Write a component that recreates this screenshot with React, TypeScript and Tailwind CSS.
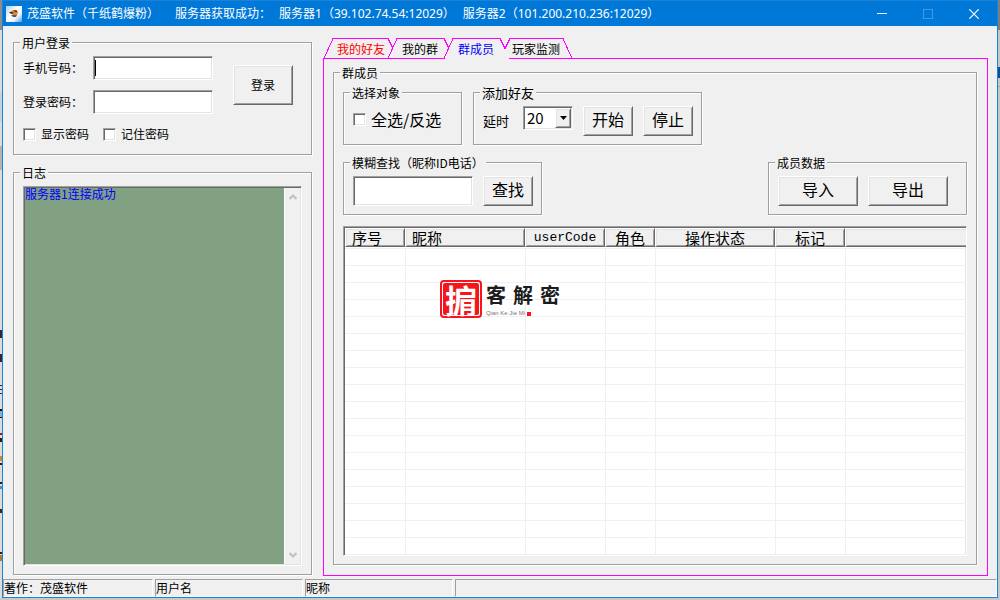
import { useState } from 'react'
import type { ReactNode } from 'react'

const sunken = 'border border-t-[#a0a0a0] border-l-[#a0a0a0] border-b-white border-r-white shadow-[inset_1px_1px_0_#696969,inset_-1px_-1px_0_#e3e3e3]'
const raised = 'border border-t-white border-l-white border-b-[#696969] border-r-[#696969] bg-[#f0f0f0] shadow-[inset_1px_1px_0_#e3e3e3,inset_-1px_-1px_0_#a0a0a0]'
const raisedOpen = 'border border-r-0 border-t-white border-l-white border-b-[#696969] bg-[#f0f0f0] shadow-[inset_1px_1px_0_#e3e3e3,inset_0_-1px_0_#a0a0a0]'

const tabs = [
  { name: '我的好友', className: 'w-14 text-[#ff0000]' },
  { name: '我的群', className: 'w-[46px] text-black' },
  { name: '群成员', className: 'w-[50px] text-[#0000ff]' },
  { name: '玩家监测', className: 'w-[54px] text-black' },
]

const columns = [
  { name: '序号', col: 'w-[60px]', head: 'text-left text-[15px] pl-1.5' },
  { name: '昵称', col: 'w-[120px]', head: 'text-left text-[15px] pl-1.5' },
  { name: 'userCode', col: 'w-[80px]', head: "text-center text-[13px] font-['Liberation_Mono',monospace]" },
  { name: '角色', col: 'w-[50px]', head: 'text-center text-[15px]' },
  { name: '操作状态', col: 'w-[120px]', head: 'text-center text-[15px]' },
  { name: '标记', col: 'w-[70px]', head: 'text-center text-[15px]' },
  { name: '', col: '', head: '' },
]

const emptyRows = Array.from({ length: 18 }, (_, i) => i)

const desktopMarks = [
  { y: 330, h: 8, color: '#3a2040' },
  { y: 354, h: 8, color: '#3a2040' },
  { y: 385, h: 1, color: '#1b2a60' },
  { y: 389, h: 1, color: '#1b2a60' },
  { y: 393, h: 1, color: '#1b2a60' },
  { y: 409, h: 2, color: '#111111' },
  { y: 411, h: 6, color: '#6fb4e8' },
  { y: 417, h: 1, color: '#111111' },
  { y: 433, h: 2, color: '#8a2020' },
  { y: 438, h: 4, color: '#222222' },
  { y: 456, h: 5, color: '#c98a3a' },
  { y: 463, h: 2, color: '#222222' },
  { y: 482, h: 2, color: '#222222' },
  { y: 486, h: 3, color: '#4b8fd0' },
  { y: 509, h: 4, color: '#3a2a10' },
  { y: 552, h: 2, color: '#222222' },
  { y: 555, h: 6, color: '#b07a30' },
]

const GroupBox = ({ title, className = '', legend = 'text-xs', children }: { title: string; className?: string; legend?: string; children: ReactNode }) => (
  <fieldset className={`min-w-0 border border-[#a0a0a0] pl-[9px] shadow-[1px_1px_0_#fff,inset_1px_1px_0_#fff] ${className}`}>
    <legend className={`-ml-[3px] h-[13px] bg-[#f0f0f0] px-0.5 leading-[13px] whitespace-nowrap ${legend}`}>{title}</legend>
    {children}
  </fieldset>
)

const PushButton = ({ children, className = '' }: { children: ReactNode; className?: string }) => (
  <button type="button" className={`shrink-0 whitespace-nowrap ${raised} ${className}`}>{children}</button>
)

const CheckBox = ({ id, label, className = '' }: { id: string; label: string; className?: string }) => (
  <div className="flex items-center gap-[5px]">
    <input id={id} type="checkbox" className={`size-[13px] shrink-0 appearance-none bg-white checked:bg-[#696969] ${sunken}`} />
    <label htmlFor={id} className={`whitespace-nowrap ${className}`}>{label}</label>
  </div>
)

const AppIcon = () => (
  <svg viewBox="0 0 16 16" className="size-4 shrink-0" aria-hidden="true">
    <defs>
      <linearGradient id="iconBg" x1="0" y1="0" x2="1" y2="1">
        <stop offset="0" stopColor="#a9d3ee" />
        <stop offset="0.45" stopColor="#ffffff" />
        <stop offset="0.7" stopColor="#e6f2fb" />
        <stop offset="1" stopColor="#4a9be0" />
      </linearGradient>
    </defs>
    <rect width="16" height="16" fill="url(#iconBg)" />
    <path d="M4 6 L7 4 L11 4 L12 7 L10 10 L7 9 Z" fill="#e0872a" />
    <path d="M3 6 L6 6 L8 7 L5 8 Z M8 4 L11 5 L11 6 L9 6 Z" fill="#3b2c28" />
    <path d="M5 9 L11 9 L10 11 L7 11 Z" fill="#4d5a80" />
  </svg>
)

const TitleBar = () => (
  <header className="flex h-[26px] shrink-0 items-center border-t border-[#1a83d8] bg-[#0078d7] pl-[3px] text-white">
    <AppIcon />
    <h1 className="ml-[5px] flex gap-2 font-['Noto_Sans','Noto_Sans_CJK_SC',sans-serif] text-xs leading-4 whitespace-nowrap">
      <span className="w-[140px]">茂盛软件（千纸鹤爆粉）</span>
      <span>服务器获取成功：</span>
      <span>服务器1（39.102.74.54:12029）</span>
      <span>服务器2（101.200.210.236:12029）</span>
    </h1>
    <div className="ml-auto flex h-full">
      <button type="button" aria-label="最小化" className="grid w-[46px] place-items-center">
        <svg width="10" height="10" aria-hidden="true"><path d="M0 4.5H10" stroke="#fff" /></svg>
      </button>
      <button type="button" aria-label="最大化" disabled className="grid w-[46px] place-items-center">
        <svg width="10" height="10" aria-hidden="true"><rect x="0.5" y="0.5" width="9" height="9" fill="none" stroke="#3f9ae3" /></svg>
      </button>
      <button type="button" aria-label="关闭" className="grid w-[46px] place-items-center">
        <svg width="10" height="10" aria-hidden="true"><path d="M0.3 0.3L9.7 9.7M9.7 0.3L0.3 9.7" stroke="#fff" strokeWidth="1.2" /></svg>
      </button>
    </div>
  </header>
)

const LoginPanel = () => (
  <GroupBox title="用户登录" className="shrink-0 pr-[18px] pb-3">
    <div className="flex items-center justify-between pt-[7px]">
      <div className="space-y-2.5">
        <div className="flex items-center">
          <label htmlFor="phone" className="w-[70px]">手机号码：</label>
          <input id="phone" type="text" className={`h-6 w-[120px] bg-white px-1 outline-none ${sunken}`} />
          <span className="-ml-[118px] h-4 w-px bg-black" />
        </div>
        <div className="flex items-center">
          <label htmlFor="password" className="w-[70px]">登录密码：</label>
          <input id="password" type="password" className={`h-6 w-[120px] bg-white px-1 outline-none ${sunken}`} />
        </div>
      </div>
      <PushButton className="h-10 w-[60px]">登录</PushButton>
    </div>
    <div className="mt-3 flex gap-[14px]">
      <CheckBox id="show-password" label="显示密码" />
      <CheckBox id="remember-password" label="记住密码" />
    </div>
  </GroupBox>
)

const LogPanel = () => (
  <GroupBox title="日志" className="flex min-h-0 flex-1 flex-col pr-[9px] pb-2">
    <div className={`mt-[7px] flex flex-1 bg-[#f0f0f0] p-px ${sunken}`}>
      <textarea readOnly aria-label="日志" defaultValue="服务器1连接成功" className="min-w-0 flex-1 resize-none bg-[#82a082] leading-3 text-[#0000ff] outline-none" />
      <div className="flex w-4 flex-col items-center justify-between border-l border-white py-1.5 text-[#bfbfbf]">
        <svg width="8" height="6" aria-hidden="true"><path d="M0.5 5L4 1.5L7.5 5" fill="none" stroke="currentColor" strokeWidth="2" /></svg>
        <svg width="8" height="6" aria-hidden="true"><path d="M0.5 1L4 4.5L7.5 1" fill="none" stroke="currentColor" strokeWidth="2" /></svg>
      </div>
    </div>
  </GroupBox>
)

const TabStrip = () => (
  <div className="relative h-5 shrink-0">
    {/* slanted outlines, open under the selected tab */}
    <svg width="250" height="21" className="absolute top-0 left-0" shapeRendering="crispEdges" aria-hidden="true">
      <rect x="122" y="20" width="64" height="1" fill="#f0f0f0" />
      <path d="M1 20.5L10 0.5H65L70 10.5M65 20.5L74 0.5H121L126 10.5M121 20.5L130 0.5H177L182 10.5L187 0.5H240L249 20.5" fill="none" stroke="#ff00ff" />
    </svg>
    <div role="tablist" className="relative flex h-5 gap-2 pt-0.5 pl-2.5">
      {tabs.map((tab) => (
        <button key={tab.name} type="button" role="tab" aria-selected={tab.name === '群成员'} className={`shrink-0 whitespace-nowrap ${tab.className}`}>{tab.name}</button>
      ))}
    </div>
  </div>
)

const Watermark = () => (
  <div className="absolute top-[53px] left-[96px] flex items-center gap-1 whitespace-nowrap text-[#1c1c1c]">
    <div className="grid h-[38px] w-[42px] place-items-center rounded-sm border-2 border-[#f5151b] bg-white p-px">
      <span className="grid h-full w-full place-items-center rounded-xs bg-[#f5151b] text-[32px] leading-8 font-bold text-white">掮</span>
    </div>
    <div>
      <div className="flex gap-[7px] text-xl leading-[29px] font-bold"><span>客</span><span>解</span><span>密</span></div>
      <div className="flex items-center gap-0.5 font-['Liberation_Sans',sans-serif] text-[6px] leading-[9px] text-[#777]">Qian Ke Jie Mi<span className="size-1 bg-[#f5151b]" /></div>
    </div>
  </div>
)

const MemberTable = () => (
  <div className={`relative mt-[11px] min-h-0 flex-1 overflow-hidden bg-white pt-px pl-px ${sunken}`}>
    <table className="w-full table-fixed border-separate border-spacing-0">
      <colgroup>
        {columns.map((c, i) => <col key={i} className={c.col} />)}
      </colgroup>
      <thead>
        <tr>
          {columns.map((c, i) => (
            <th key={i} className={`h-[19px] py-0 pr-0 leading-4 font-normal ${i === columns.length - 1 ? raisedOpen : raised} ${c.head}`}>{c.name}</th>
          ))}
        </tr>
      </thead>
      <tbody>
        <tr>
          {columns.map((c, i) => <td key={i} className="h-0.5 border-b border-[#f0f0f0] p-0" />)}
        </tr>
        {emptyRows.map((row) => (
          <tr key={row}>
            {columns.map((c, i) => <td key={i} className={`h-[17px] border-b border-[#f0f0f0] p-0 ${i > 0 ? 'border-l' : ''}`} />)}
          </tr>
        ))}
      </tbody>
    </table>
    <Watermark />
  </div>
)

const MembersPanel = () => {
  const [delay, setDelay] = useState('20')
  return (
    <GroupBox title="群成员" className="flex min-h-0 flex-1 flex-col pr-[9px] pb-2">
      <div className="flex gap-[11px] pt-[7px]">
        <GroupBox title="选择对象" className="h-[59px] w-[119px]">
          <div className="pt-2"><CheckBox id="select-all" label="全选/反选" className="text-base" /></div>
        </GroupBox>
        <GroupBox title="添加好友" legend="text-[13px]" className="h-[59px] w-[229px]">
          <div className="flex items-center gap-2.5 pt-[7px]">
            <label htmlFor="delay" className="w-[30px] text-[13px]">延时</label>
            <div className={`relative -mt-1.5 h-6 w-[50px] bg-white ${sunken}`}>
              <select id="delay" value={delay} onChange={(e) => setDelay(e.target.value)} className="h-full w-full appearance-none bg-transparent pl-[3px] text-[15px] outline-none">
                <option>10</option>
                <option>20</option>
                <option>30</option>
              </select>
              <span className={`pointer-events-none absolute inset-y-px right-px grid w-4 place-items-center ${raised}`}>
                <svg width="7" height="4" aria-hidden="true"><path d="M0 0H7L3.5 4Z" /></svg>
              </span>
            </div>
            <PushButton className="h-[30px] w-[50px] pb-1 text-base">开始</PushButton>
            <PushButton className="h-[30px] w-[50px] pb-1 text-base">停止</PushButton>
          </div>
        </GroupBox>
      </div>
      <div className="flex justify-between pt-[11px]">
        <GroupBox title="模糊查找（昵称ID电话）" className="h-[59px] w-[199px]">
          <div className="flex gap-2.5 pt-[7px]">
            <input type="text" aria-label="模糊查找" className={`h-[30px] w-[120px] bg-white px-1 text-base outline-none ${sunken}`} />
            <PushButton className="h-[30px] w-[50px] pb-1 text-base">查找</PushButton>
          </div>
        </GroupBox>
        <GroupBox title="成员数据" className="h-[59px] w-[199px]">
          <div className="flex gap-2.5 pt-[7px]">
            <PushButton className="h-[30px] w-20 pb-1 text-base">导入</PushButton>
            <PushButton className="h-[30px] w-20 pb-1 text-base">导出</PushButton>
          </div>
        </GroupBox>
      </div>
      <MemberTable />
    </GroupBox>
  )
}

const StatusBar = () => {
  const cell = 'h-[18px] border border-t-[#a0a0a0] border-l-[#a0a0a0] border-b-white border-r-white leading-4'
  return (
    <footer className="flex shrink-0 gap-0.5">
      <div className={`w-[150px] ${cell}`}>著作：茂盛软件</div>
      <div className={`w-[148px] ${cell}`}>用户名</div>
      <div className={`w-[148px] ${cell}`}>昵称</div>
      <div className={`flex-1 ${cell}`} />
    </footer>
  )
}

const App = () => (
  <div className="flex h-screen min-h-[600px] bg-[#c8c8c8] pb-0.5 font-['Noto_Sans_CJK_SC',sans-serif] text-xs text-black">
    <svg className="h-full w-0.5 shrink-0 bg-[#dcdcdc]" aria-hidden="true">
      <rect width="2" height="30" fill="#8c8c8c" />
      <rect y="92" width="2" height="30" fill="#c4d3e0" />
      <rect y="146" width="2" height="24" fill="#b4b4b4" />
      {desktopMarks.map((m) => <rect key={m.y} y={m.y} width="2" height={m.h} fill={m.color} />)}
    </svg>
    <div className="flex min-w-0 flex-1 flex-col border-x border-b border-[#1883d7] bg-[#f0f0f0]">
      <TitleBar />
      <main className="flex min-h-0 flex-1 pr-[9px] pl-2.5">
        <div className="mr-[11px] flex w-[299px] shrink-0 flex-col gap-[11px] pt-2.5 pb-1">
          <LoginPanel />
          <LogPanel />
        </div>
        <div className="flex min-w-0 flex-1 flex-col pt-3 pb-[3px]">
          <TabStrip />
          <div className="flex min-h-0 flex-1 flex-col border border-[#ff00ff] pt-[7px] pr-2.5 pb-2.5 pl-[9px]">
            <MembersPanel />
          </div>
        </div>
      </main>
      <StatusBar />
    </div>
    <svg className="h-full w-0.5 shrink-0 bg-[#c3c7cb]" aria-hidden="true">
      <rect width="2" height="30" fill="#7d7d7d" />
      <rect y="67" width="2" height="11" fill="#0f4f94" />
      <rect y="86" width="2" height="1" fill="#a8a8a8" />
    </svg>
  </div>
)

export default App
